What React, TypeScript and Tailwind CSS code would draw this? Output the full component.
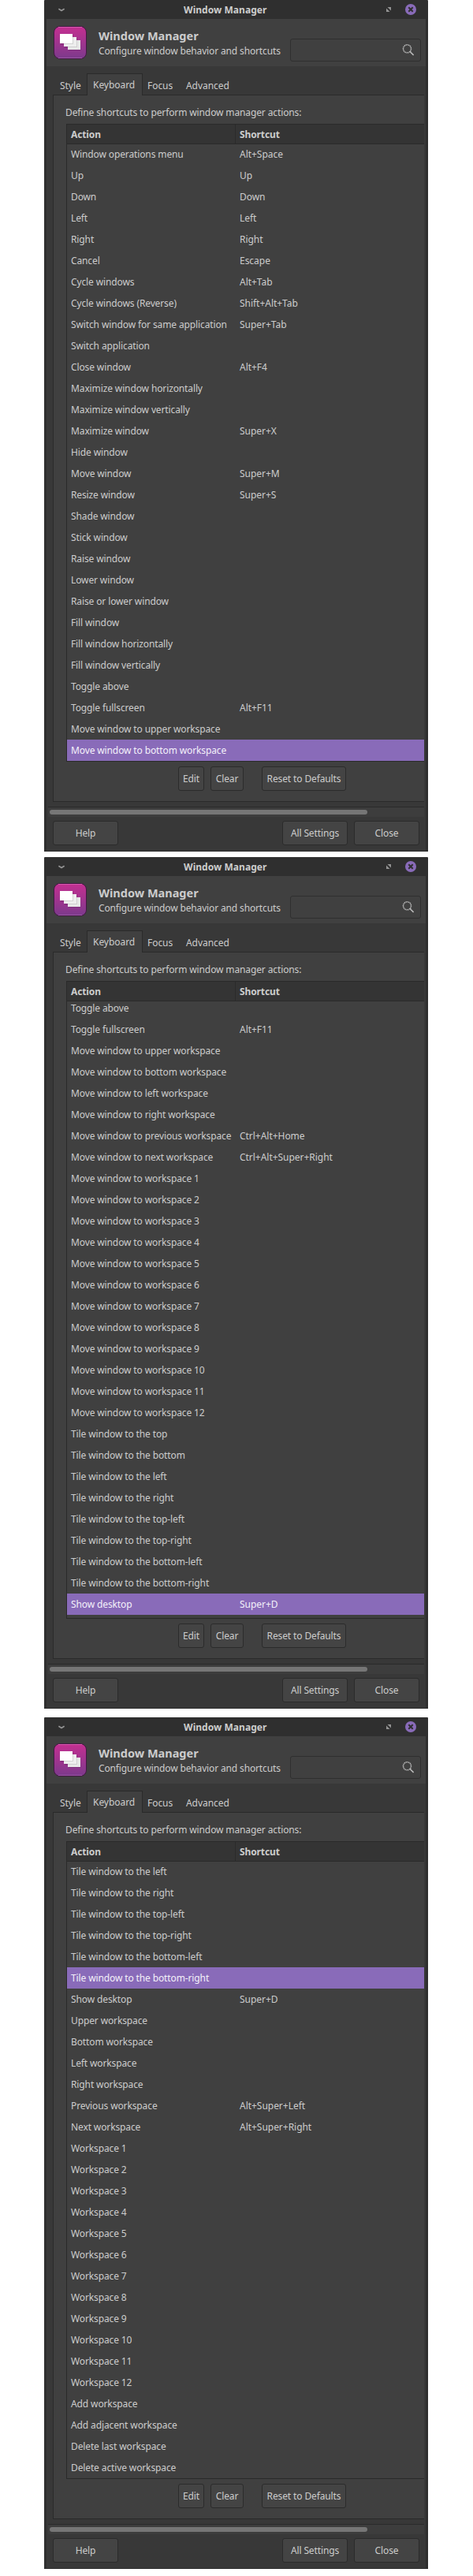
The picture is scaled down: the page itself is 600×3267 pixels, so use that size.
type Row = [string, string?];

const workspaces = (prefix: string): Row[] =>
  Array.from({ length: 12 }, (_, i): Row => [`${prefix} ${i + 1}`]);

const first: Row[] = [
  ["Window operations menu", "Alt+Space"],
  ["Up", "Up"],
  ["Down", "Down"],
  ["Left", "Left"],
  ["Right", "Right"],
  ["Cancel", "Escape"],
  ["Cycle windows", "Alt+Tab"],
  ["Cycle windows (Reverse)", "Shift+Alt+Tab"],
  ["Switch window for same application", "Super+Tab"],
  ["Switch application"],
  ["Close window", "Alt+F4"],
  ["Maximize window horizontally"],
  ["Maximize window vertically"],
  ["Maximize window", "Super+X"],
  ["Hide window"],
  ["Move window", "Super+M"],
  ["Resize window", "Super+S"],
  ["Shade window"],
  ["Stick window"],
  ["Raise window"],
  ["Lower window"],
  ["Raise or lower window"],
  ["Fill window"],
  ["Fill window horizontally"],
  ["Fill window vertically"],
  ["Toggle above"],
  ["Toggle fullscreen", "Alt+F11"],
  ["Move window to upper workspace"],
  ["Move window to bottom workspace"],
];

const second: Row[] = [
  ["Toggle above"],
  ["Toggle fullscreen", "Alt+F11"],
  ["Move window to upper workspace"],
  ["Move window to bottom workspace"],
  ["Move window to left workspace"],
  ["Move window to right workspace"],
  ["Move window to previous workspace", "Ctrl+Alt+Home"],
  ["Move window to next workspace", "Ctrl+Alt+Super+Right"],
  ...workspaces("Move window to workspace"),
  ["Tile window to the top"],
  ["Tile window to the bottom"],
  ["Tile window to the left"],
  ["Tile window to the right"],
  ["Tile window to the top-left"],
  ["Tile window to the top-right"],
  ["Tile window to the bottom-left"],
  ["Tile window to the bottom-right"],
  ["Show desktop", "Super+D"],
];

const third: Row[] = [
  ["Tile window to the left"],
  ["Tile window to the right"],
  ["Tile window to the top-left"],
  ["Tile window to the top-right"],
  ["Tile window to the bottom-left"],
  ["Tile window to the bottom-right"],
  ["Show desktop", "Super+D"],
  ["Upper workspace"],
  ["Bottom workspace"],
  ["Left workspace"],
  ["Right workspace"],
  ["Previous workspace", "Alt+Super+Left"],
  ["Next workspace", "Alt+Super+Right"],
  ...workspaces("Workspace"),
  ["Add workspace"],
  ["Add adjacent workspace"],
  ["Delete last workspace"],
  ["Delete active workspace"],
];

function AppIcon({ id }: { id: string }) {
  return (
    <svg width="42" height="42" viewBox="0 0 42 42" className="shrink-0">
      <defs>
        <linearGradient id={id} x1="0" y1="0" x2="0" y2="1">
          <stop offset="0" stopColor="#c42f91" />
          <stop offset="1" stopColor="#7c3a8c" />
        </linearGradient>
      </defs>
      <rect x="0.5" y="0.5" width="41" height="41" rx="7.5" fill={`url(#${id})`} stroke="#431843" />
      <path d="M6 1.5H36" stroke="#d558ac" />
      <path d="M6 40.5H36" stroke="#9a54a6" />
      <g fill="#000" opacity="0.12">
        <rect x="9" y="11" width="16" height="12.5" />
        <rect x="14" y="15" width="16" height="12.5" />
        <rect x="19" y="19" width="15.5" height="12" />
      </g>
      <rect x="18" y="18" width="16" height="12" fill="#e8e8e8" />
      <path d="M18 18H30V27H18Z" fill="#cfcfcf" />
      <rect x="13" y="14" width="16" height="12" fill="#eeeeee" />
      <path d="M13 14H25V23H13Z" fill="#d2d2d2" />
      <rect x="8" y="10" width="16" height="12" fill="#fff" />
    </svg>
  );
}

function Button({ label, className }: { label: string; className: string }) {
  return (
    <button
      className={`h-[31px] shrink-0 rounded-[3px] border border-[#2b2b2b] bg-[#444444] text-center leading-[29px] whitespace-nowrap ${className}`}
    >
      {label}
    </button>
  );
}

interface PanelProps {
  id: string;
  rows: Row[];
  selected: number;
  shift: string;
}

function ManagerWindow({ id, rows, selected, shift }: PanelProps) {
  return (
    <section className="flex h-[1080px] w-[487px] flex-col rounded-t-[1px] border-b border-[#2a2a2a] bg-[#2f2f2f]">
      <header className="flex h-6 shrink-0 items-center pr-[15px] pl-[18px]">
        <svg width="8" height="5" viewBox="0 0 8 5" fill="none" stroke="#949494" strokeWidth="1.7">
          <path d="M0.4 1.2L4 3.5L7.6 1.2" />
        </svg>
        <h1 className="ml-[151px] h-6 leading-[25px] font-bold tracking-[0.04px] whitespace-nowrap">Window Manager</h1>
        <svg width="6" height="6" viewBox="0 0 6 6" fill="#949494" className="ml-auto">
          <path d="M1.5 0H6V4.5Z" />
          <path d="M0 1.5V6H4.5Z" />
        </svg>
        <svg width="14" height="14" viewBox="0 0 14 14" className="ml-[18px]">
          <circle cx="7" cy="7" r="7" fill="#896bb9" />
          <path d="M4.3 4.3L9.7 9.7M9.7 4.3L4.3 9.7" stroke="#2f2f2f" strokeWidth="2" />
        </svg>
      </header>

      <div className="mx-[3px] flex min-h-0 flex-1 flex-col bg-[#383838]">
        <div className="flex h-[60px] shrink-0 bg-[#404040] pt-[9px] pl-[9px]">
          <AppIcon id={id} />
          <div className="ml-[15px] w-[243px] shrink-0 whitespace-nowrap">
            <h2 className="h-[22px] text-[14.5px] leading-[24px] font-bold tracking-normal">Window Manager</h2>
            <p className="h-5 leading-[19px] tracking-[-0.14px]">Configure window behavior and shortcuts</p>
          </div>
          <div className="mt-4 flex h-[29px] w-[166px] justify-end rounded-[3px] border border-[#2f2f2f] pt-[6px] pr-2">
            <svg width="15" height="15" viewBox="0 0 15 15" fill="none" stroke="#bdbdbd">
              <circle cx="6.5" cy="5.8" r="5" strokeWidth="1.5" strokeDasharray="1.3 0.6" />
              <path d="M9.9 9.3L14.6 14" strokeWidth="1.5" />
            </svg>
          </div>
        </div>

        <nav className="flex h-9 shrink-0 pt-[9px] pl-2 tracking-[-0.05px]">
          <span className="mt-[3px] w-[43px] pl-[9px] leading-[25px]">Style</span>
          <span className="z-10 h-7 w-[71px] border border-b-0 border-[#2a2a2a] bg-[#404040] pl-[7px] leading-[27px]">
            Keyboard
          </span>
          <span className="mt-[3px] w-[55px] pl-[6px] leading-[25px]">Focus</span>
          <span className="mt-[3px] leading-[25px]">Advanced</span>
        </nav>

        <main className="mr-[2px] ml-2 flex h-[897px] shrink-0 flex-col border border-r-0 border-[#2a2a2a] bg-[#404040]">
          <p className="h-9 pt-[9px] pl-[15px] leading-[25px]">Define shortcuts to perform window manager actions:</p>
          <div className="ml-4 flex h-[809px] shrink-0 flex-col border border-r-0 border-[#2a2a2a]">
            <div className="flex h-[25px] shrink-0 border-b border-[#2a2a2a] bg-[#343434] leading-[25px] font-bold">
              <span className="w-[214px] border-r border-[#2a2a2a] pl-[5px]">Action</span>
              <span className="pl-[5px]">Shortcut</span>
            </div>
            <div className="min-h-0 flex-1 overflow-hidden">
              <ul className={shift}>
                {rows.map(([action, shortcut], i) => (
                  <li
                    key={i}
                    className={`flex h-[27px] leading-[27px] whitespace-nowrap ${
                      i === selected ? "bg-[#896bb9] text-[#f4f1f9]" : ""
                    }`}
                  >
                    <span className="w-[214px] shrink-0 pl-[5px]">{action}</span>
                    <span className="pl-[5px] tracking-[-0.03px]">{shortcut}</span>
                  </li>
                ))}
              </ul>
            </div>
          </div>
          <div className="mt-[6px] flex pl-[158px]">
            <Button label="Edit" className="w-[33px]" />
            <Button label="Clear" className="ml-2 w-[42px]" />
            <Button label="Reset to Defaults" className="ml-[23px] w-[107px]" />
          </div>
        </main>

        <div className="mt-[6px] mr-[2px] ml-[2px] h-[13px] shrink-0 border-t border-[#2a2a2a] bg-[#3d3d3d] pt-[3px] pl-[2px]">
          <div className="h-[6px] w-[403px] rounded-full bg-[#767676]" />
        </div>

        <footer className="mt-[5px] flex pl-2">
          <Button label="Help" className="w-[83px]" />
          <Button label="All Settings" className="ml-[208px] w-[83px]" />
          <Button label="Close" className="ml-2 w-[83px]" />
        </footer>
      </div>
    </section>
  );
}

export default function App() {
  return (
    <div className="flex h-[3267px] w-[600px] flex-col bg-white pl-[56px] font-['Noto_Sans',sans-serif] text-[12px] tracking-[-0.12px] text-[#cccccc]">
      <ManagerWindow id="icon-a" rows={first} selected={28} shift="-mt-px" />
      <div className="h-[7px] shrink-0" />
      <ManagerWindow id="icon-b" rows={second} selected={28} shift="-mt-[5px]" />
      <div className="h-[11px] shrink-0" />
      <ManagerWindow id="icon-c" rows={third} selected={5} shift="-mt-px" />
    </div>
  );
}
